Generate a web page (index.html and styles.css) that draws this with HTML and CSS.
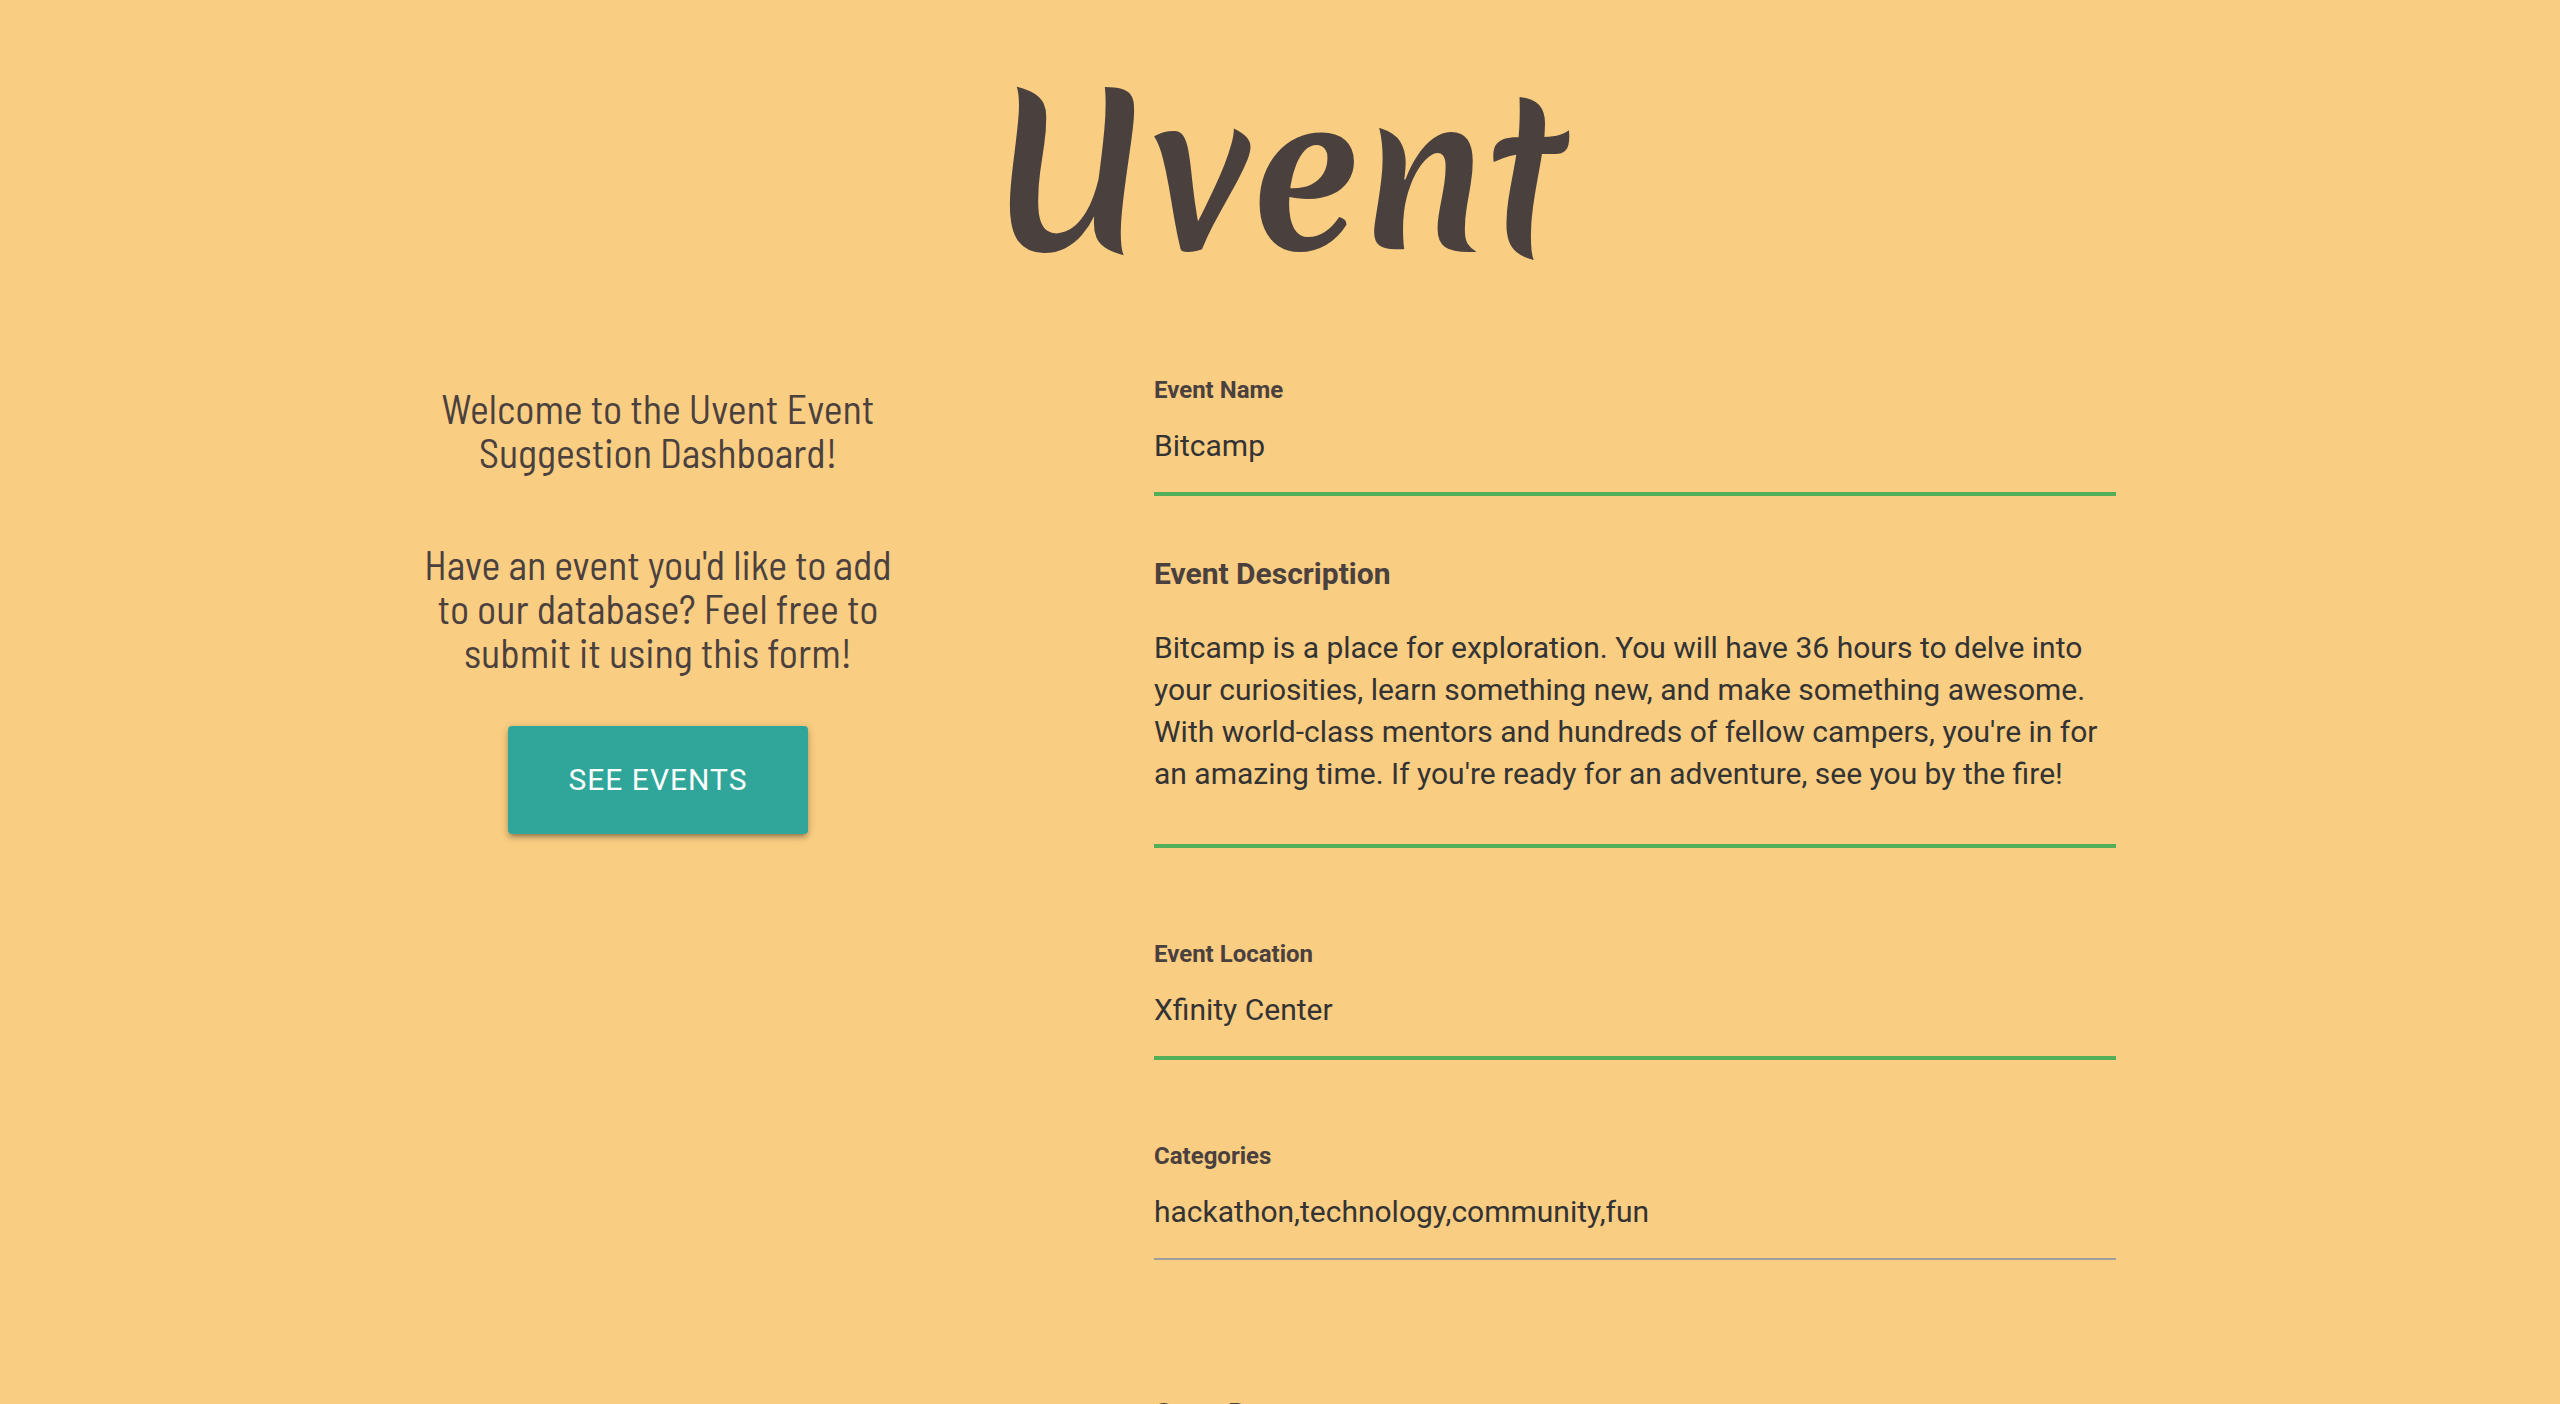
FILE: index.html
```html
<!DOCTYPE html>
<html lang="en">
<head>
  <meta charset="utf-8">
  <meta name="viewport" content="width=device-width, initial-scale=1">
  <title>Uvent</title>
  <link rel="stylesheet" href="styles.css">
</head>
<body>
  <header class="masthead">
    <h1 class="brand">Uvent</h1>
  </header>
  <main class="dashboard">
    <section class="intro">
      <p class="intro-text">Welcome to the Uvent Event<br>Suggestion Dashboard!</p>
      <p class="intro-text">Have an event you'd like to add<br>to our database? Feel free to<br>submit it using this form!</p>
      <button class="events-button" type="button">See Events</button>
    </section>
    <form class="event-form">
      <div class="field">
        <label class="label" for="event-name">Event Name</label>
        <input class="input valid" id="event-name" type="text" value="Bitcamp">
      </div>
      <div class="field field-description">
        <label class="label label-large" for="event-description">Event Description</label>
        <textarea class="input textarea valid" id="event-description" rows="4" spellcheck="false">Bitcamp is a place for exploration. You will have 36 hours to delve into your curiosities, learn something new, and make something awesome. With world-class mentors and hundreds of fellow campers, you're in for an amazing time. If you're ready for an adventure, see you by the fire!</textarea>
      </div>
      <div class="field field-location">
        <label class="label" for="event-location">Event Location</label>
        <input class="input valid" id="event-location" type="text" value="Xfinity Center">
      </div>
      <div class="field field-categories">
        <label class="label" for="categories">Categories</label>
        <input class="input" id="categories" type="text" value="hackathon,technology,community,fun">
      </div>
      <div class="field field-date">
        <label class="label label-large" for="start-date">Start Date</label>
        <input class="input" id="start-date" type="text">
      </div>
    </form>
  </main>
</body>
</html>
```

FILE: styles.css
```css
* {
  box-sizing: border-box;
}

html {
  height: 100%;
}

body {
  height: 100%;
  margin: 0;
  overflow-y: auto;
  scrollbar-width: none;
  background: #f9cd82;
  color: #4a403d;
  font-family: Roboto, "Noto Sans", sans-serif;
}

.masthead {
  padding: 42px 0 76px;
  text-align: center;
}

.brand {
  margin: 0;
  font-family: Merienda, Lato, sans-serif;
  font-size: 202px;
  font-weight: 700;
  line-height: 260px;
}

.dashboard {
  display: grid;
  grid-template-columns: 548fr 962fr;
  column-gap: 222px;
  width: 70%;
  margin: 0 auto;
  padding-right: 60px;
}

.intro {
  display: flex;
  flex-direction: column;
  align-items: center;
  padding-top: 8px;
}

.intro-text {
  margin: 0 0 68px;
  font-family: "Barlow Semi Condensed", "Barlow Condensed", Roboto, sans-serif;
  font-size: 40px;
  font-weight: 400;
  line-height: 44px;
  text-align: center;
  white-space: nowrap;
}

.events-button {
  width: 300px;
  height: 108px;
  margin-top: -16px;
  padding: 0;
  border: 0;
  border-radius: 4px;
  background: #30a599;
  box-shadow: 0 4px 4px rgba(0, 0, 0, 0.14), 0 6px 2px -4px rgba(0, 0, 0, 0.12), 0 2px 10px rgba(0, 0, 0, 0.2);
  color: #fff;
  font: 400 30px/108px Roboto, sans-serif;
  letter-spacing: 1px;
  text-transform: uppercase;
}

.field {
  display: flex;
  flex-direction: column;
}

.field-description {
  margin-top: 65px;
}

.field-location {
  margin-top: 96px;
}

.field-categories {
  margin-top: 86px;
}

.field-date {
  margin-top: 139px;
}

.label {
  font-size: 24px;
  font-weight: 700;
  line-height: 24px;
}

.label-large {
  font-size: 30px;
  line-height: 30px;
}

.input {
  width: 100%;
  height: 92px;
  padding: 0 0 3px;
  border: 0;
  border-bottom: 2px solid #9e9e9e;
  border-radius: 0;
  outline: 0;
  background: transparent;
  color: #333;
  font: 400 30px Roboto, sans-serif;
}

.textarea {
  height: auto;
  margin-top: 14px;
  padding: 24px 0 49px;
  overflow: hidden;
  line-height: 42px;
  resize: none;
}

.valid {
  border-color: #53af57;
  box-shadow: 0 2px 0 #53af57;
}
```
